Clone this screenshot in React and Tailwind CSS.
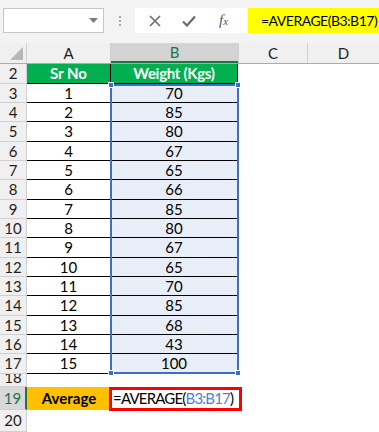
import React from "react";

const dataRows = [
  { r: 3, a: "1", b: "70", h: "h-[19px]" },
  { r: 4, a: "2", b: "85", h: "h-[19px]" },
  { r: 5, a: "3", b: "80", h: "h-[20px]" },
  { r: 6, a: "4", b: "67", h: "h-[19px]" },
  { r: 7, a: "5", b: "65", h: "h-[19px]" },
  { r: 8, a: "6", b: "66", h: "h-[20px]" },
  { r: 9, a: "7", b: "85", h: "h-[19px]" },
  { r: 10, a: "8", b: "80", h: "h-[19px]" },
  { r: 11, a: "9", b: "67", h: "h-[20px]" },
  { r: 12, a: "10", b: "65", h: "h-[19px]" },
  { r: 13, a: "11", b: "70", h: "h-[19px]" },
  { r: 14, a: "12", b: "85", h: "h-[20px]" },
  { r: 15, a: "13", b: "68", h: "h-[19px]" },
  { r: 16, a: "14", b: "43", h: "h-[19px]" },
  { r: 17, a: "15", b: "100", h: "h-[20px]" },
];

const font = "font-['Lato','Liberation_Sans',sans-serif]";

function RowHead({ children, className = "" }) {
  return (
    <div
      className={`w-[27px] shrink-0 flex items-center justify-center bg-[#f0f0f0] border-r border-b border-[#d0d0d0] text-[15px] text-[#1e1e1e] ${className}`}
    >
      {children}
    </div>
  );
}

export default function App() {
  return (
    <div className={`w-[379px] h-[432px] overflow-hidden bg-white ${font}`}>
      {/* formula bar */}
      <div className="h-[43px] bg-[#f3f3f3] flex items-start pt-[8px] pl-[3px]">
        <div className="shrink-0 w-[101px] h-[25px] bg-white border border-[#c6c6c6] flex items-center justify-end pr-[5px]">
          <svg width="9" height="5" viewBox="0 0 9 5">
            <path d="M0 0 L9 0 L4.5 5 Z" fill="#7a7a7a" />
          </svg>
        </div>
        <div className="shrink-0 ml-[15px] mt-[8px] flex flex-col gap-[2px]">
          <div className="w-[2px] h-[2px] bg-[#a8a8a8]" />
          <div className="w-[2px] h-[2px] bg-[#a8a8a8]" />
          <div className="w-[2px] h-[2px] bg-[#a8a8a8]" />
        </div>
        <div className="shrink-0 ml-[14px] w-[112px] h-[25px] bg-white flex items-center">
          <svg className="ml-[14px]" width="12" height="12" viewBox="0 0 12 12">
            <path d="M1 1 L11 11 M11 1 L1 11" stroke="#6a6a6a" strokeWidth="1.6" />
          </svg>
          <svg className="ml-[21px]" width="14" height="12" viewBox="0 0 14 12">
            <path d="M1 6.5 L5 10.5 L13 1.5" stroke="#6a6a6a" strokeWidth="2.2" fill="none" />
          </svg>
          <span className="ml-[23px] font-['Liberation_Serif',serif] italic text-[15px] text-[#555] leading-none">
            f<span className="text-[11px]">x</span>
          </span>
        </div>
        <div className="ml-[1px] min-w-0 flex-1 h-[25px] bg-[#ffff00] flex items-center pl-[13px] text-[14px] tracking-[-0.5px] text-black whitespace-nowrap overflow-hidden">
          =AVERAGE(B3:B17)
        </div>
      </div>

      {/* column headers */}
      <div className="flex h-[21px] bg-[#f0f0f0] border-b border-[#ababab]">
        <div className="w-[27px] shrink-0 border-r border-[#d0d0d0] flex items-end justify-end pr-[3px] pb-[3px]">
          <svg width="13" height="13" viewBox="0 0 13 13">
            <path d="M13 0 L13 13 L0 13 Z" fill="#b7b7b7" />
          </svg>
        </div>
        <div className="w-[84px] shrink-0 border-r border-[#d0d0d0] flex items-center justify-center text-[15px] text-[#1e1e1e]">
          A
        </div>
        <div className="w-[127px] shrink-0 bg-[#d4d4d4] border-b-2 border-[#217346] flex items-center justify-center text-[15px] text-[#217346]">
          B
        </div>
        <div className="w-[70px] shrink-0 border-l border-r border-[#d0d0d0] flex items-center justify-center text-[15px] text-[#1e1e1e]">
          C
        </div>
        <div className="flex-1 flex items-center justify-center text-[15px] text-[#1e1e1e]">D</div>
      </div>

      <div className="relative">
        {/* row 2 */}
        <div className="flex h-[20px]">
          <RowHead>2</RowHead>
          <div className="w-[84px] shrink-0 bg-[#00b050] border-b border-r border-black flex items-center justify-center text-[15px] font-bold text-white">
            Sr No
          </div>
          <div className="w-[127px] shrink-0 bg-[#00b050] border-b border-r border-black flex items-center justify-center text-[15px] font-bold tracking-[-0.3px] text-white">
            Weight (Kgs)
          </div>
          <div className="flex-1" />
        </div>

        {dataRows.map((row) => (
          <div key={row.r} className={`flex ${row.h}`}>
            <RowHead>{row.r}</RowHead>
            <div className="w-[84px] shrink-0 border-b border-r border-black flex items-center justify-center text-[15px] text-black">
              {row.a}
            </div>
            <div className="w-[127px] shrink-0 bg-[#e8eef8] border-b border-r border-black flex items-center justify-center text-[15px] text-black">
              {row.b}
            </div>
            <div className="flex-1" />
          </div>
        ))}

        {/* row 18 (short) */}
        <div className="flex h-[13px]">
          <div className="w-[27px] shrink-0 flex justify-center bg-[#f0f0f0] border-r border-b border-[#d0d0d0] overflow-hidden">
            <span className="block text-[15px] leading-[15px] text-[#1e1e1e] -mt-[4px]">18</span>
          </div>
          <div className="flex-1" />
        </div>

        {/* row 19 */}
        <div className="flex h-[23px]">
          <div className="w-[27px] shrink-0 flex items-center justify-center bg-[#d8d8d8] border-r-2 border-b border-r-[#217346] border-b-[#d0d0d0] text-[15px] text-[#217346]">
            19
          </div>
          <div className="w-[84px] shrink-0 bg-[#ffc000] flex items-center justify-center text-[15px] font-bold text-black">
            Average
          </div>
          <div className="flex-1 flex items-center">
            <div className="-ml-[2px] w-[133px] h-[24px] border-[3px] border-[#ff0000] flex items-center pl-[1px] text-[15px] tracking-[-0.8px] text-black whitespace-nowrap overflow-hidden">
              =AVERAGE(<span className="text-[#4f7fd4]">B3:B17</span>)
            </div>
          </div>
        </div>

        {/* row 20 */}
        <div className="flex h-[22px]">
          <RowHead>20</RowHead>
          <div className="flex-1" />
        </div>

        {/* selection highlight overlay */}
        <div className="absolute left-[110px] top-[20px] w-[129px] h-[290px] border-2 border-[#3d6ec6] pointer-events-none">
          <div className="absolute -left-[4px] -top-[4px] w-[6px] h-[6px] bg-[#3d6ec6] border border-white" />
          <div className="absolute -right-[4px] -top-[4px] w-[6px] h-[6px] bg-[#3d6ec6] border border-white" />
          <div className="absolute -left-[4px] -bottom-[4px] w-[6px] h-[6px] bg-[#3d6ec6] border border-white" />
          <div className="absolute -right-[4px] -bottom-[4px] w-[6px] h-[6px] bg-[#3d6ec6] border border-white" />
        </div>
      </div>
    </div>
  );
}
